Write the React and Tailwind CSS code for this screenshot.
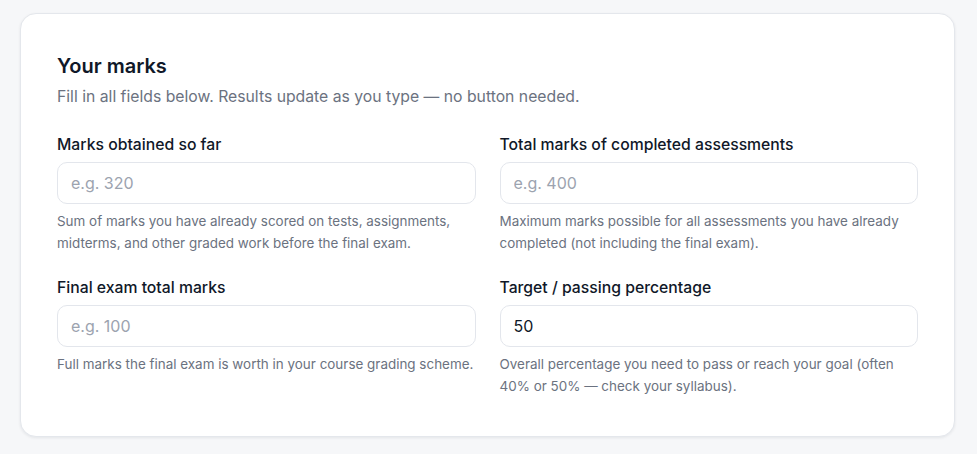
import React, { useState } from 'react';

const fields = [
  {
    id: 'obtained',
    label: 'Marks obtained so far',
    placeholder: 'e.g. 320',
    help: 'Sum of marks you have already scored on tests, assignments, midterms, and other graded work before the final exam.',
  },
  {
    id: 'completed',
    label: 'Total marks of completed assessments',
    placeholder: 'e.g. 400',
    help: 'Maximum marks possible for all assessments you have already completed (not including the final exam).',
  },
  {
    id: 'final',
    label: 'Final exam total marks',
    placeholder: 'e.g. 100',
    help: 'Full marks the final exam is worth in your course grading scheme.',
  },
  {
    id: 'target',
    label: 'Target / passing percentage',
    placeholder: 'e.g. 50',
    help: 'Overall percentage you need to pass or reach your goal (often 40% or 50% — check your syllabus).',
    initial: '50',
  },
];

const Field = ({ field, value, onChange }) => (
  <div className="flex flex-col">
    <label htmlFor={field.id} className="text-[15.75px] font-medium text-gray-900 leading-[24px] mb-[5px]">
      {field.label}
    </label>
    <input
      id={field.id}
      type="text"
      inputMode="decimal"
      value={value}
      placeholder={field.placeholder}
      onChange={(e) => onChange(field.id, e.target.value)}
      className="h-[42px] w-full rounded-[10px] border border-[#e3e6ec] bg-white px-[13px] text-[16px] text-gray-900 placeholder:text-[#9ca3af] outline-none"
    />
    <p className="mt-[6px] text-[13.45px] leading-[22px] text-[#6b7280]">{field.help}</p>
  </div>
);

export default function App() {
  const [values, setValues] = useState(
    Object.fromEntries(fields.map((f) => [f.id, f.initial || '']))
  );

  const update = (id, v) => setValues((prev) => ({ ...prev, [id]: v }));

  return (
    <div className="min-h-screen bg-[#f6f7f9] px-[20px] pt-[13px] font-['Inter','Noto_Sans',sans-serif]">
      <div className="w-[935px] rounded-[16px] border border-[#e4e7ec] bg-white px-[36px] pt-[38px] pb-[39px] shadow-[0_1px_3px_rgba(16,24,40,0.08)]">
        <h2 className="text-[20px] font-semibold leading-[28px] text-gray-900">Your marks</h2>
        <p className="mt-[5px] text-[15.75px] leading-[24px] text-[#6b7280]">
          Fill in all fields below. Results update as you type — no button needed.
        </p>
        <div className="mt-[24px] grid grid-cols-2 gap-x-[24px] gap-y-[22px]">
          {fields.map((f) => (
            <Field key={f.id} field={f} value={values[f.id]} onChange={update} />
          ))}
        </div>
      </div>
    </div>
  );
}
